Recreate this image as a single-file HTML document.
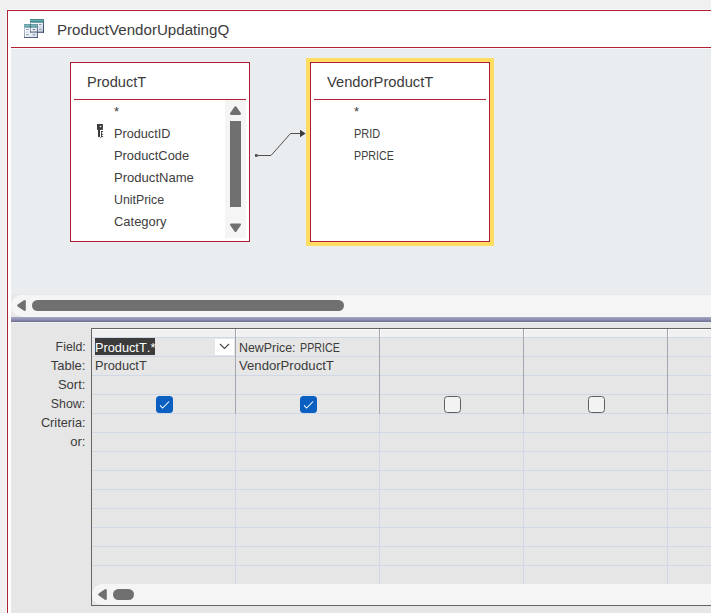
<!DOCTYPE html>
<html>
<head>
<meta charset="utf-8">
<style>
html,body{margin:0;padding:0;}
body{width:711px;height:613px;overflow:hidden;background:#f0f0f0;position:relative;
 font-family:"Liberation Sans",sans-serif;color:#3b3b3b;}
.abs{position:absolute;}
.t{position:absolute;white-space:nowrap;line-height:1;transform-origin:0 0;}
/* window */
#halo{left:6px;top:9px;width:720px;height:620px;border-left:1px solid #f1fcfc;border-top:1px solid #f1fcfc;}
#win{left:7px;top:10px;width:720px;height:620px;border-left:1px solid #b11f30;border-top:1px solid #b11f30;background:#fff;}
#tline{left:11px;top:47px;width:720px;height:1px;background:#b11f30;}
#tline2{left:11px;top:48px;width:720px;height:1px;background:#f1fbfb;}
#upper{left:11px;top:49px;width:720px;height:245px;background:#e9edf0;}
/* table boxes */
.box{position:absolute;background:#fff;border:1px solid #b11f30;box-sizing:border-box;}
.sep{position:absolute;height:1px;background:#b11f30;}
.fld{position:absolute;white-space:nowrap;line-height:1;font-size:13px;color:#404040;transform-origin:0 0;}
/* scrollbars */
.dk{background:#707070;}
/* lower pane */
#hsb{left:11px;top:294px;width:720px;height:23px;background:#e8e8e8;}
#hsbt{left:11px;top:295px;width:720px;height:21px;background:#f5f5f5;border-radius:10px 0 0 10px;}
#split{left:11px;top:317px;width:720px;height:5px;background:linear-gradient(#a7a7c3,#9292b2 45%,#6d6d93);}
#lower{left:11px;top:322px;width:720px;height:300px;background:#e6e6e6;}
.lbl{position:absolute;white-space:nowrap;line-height:1;font-size:13px;color:#3b3b3b;text-align:right;right:625.6px;transform-origin:100% 0;}
.gt{position:absolute;white-space:nowrap;line-height:1;font-size:13px;color:#3b3b3b;transform-origin:0 0;}
.hl{position:absolute;left:92px;width:640px;height:1px;background:#d0d8e8;}
.vl{position:absolute;width:1px;}
.cb{position:absolute;top:396px;width:17px;height:17px;box-sizing:border-box;border-radius:3.5px;}
.cb.on{background:#0a5fc0;}
.cb.off{background:#f3f3f3;border:1px solid #5e5e5e;}
</style>
</head>
<body>
<div class="abs" id="halo"></div>
<div class="abs" id="win"></div>
<div class="abs" id="tline"></div>
<div class="abs" id="tline2"></div>
<div class="abs" id="upper"></div>

<!-- title icon -->
<svg class="abs" style="left:23px;top:18px" width="23" height="22" viewBox="0 0 23 22">
 <defs>
  <linearGradient id="bd" x1="0" y1="0" x2="1" y2="1"><stop offset="0" stop-color="#ffffff"/><stop offset="0.5" stop-color="#eef2f8"/><stop offset="1" stop-color="#c3cee0"/></linearGradient>
  <linearGradient id="hd" x1="0" y1="0" x2="0" y2="1"><stop offset="0" stop-color="#2c7476"/><stop offset="0.35" stop-color="#74b3b7"/><stop offset="0.6" stop-color="#438f92"/><stop offset="1" stop-color="#3a8588"/></linearGradient>
  <linearGradient id="rb" x1="0" y1="0" x2="0" y2="1"><stop offset="0" stop-color="#5f7a92"/><stop offset="1" stop-color="#2f3f5a"/></linearGradient>
  <linearGradient id="lb" x1="0" y1="0" x2="0" y2="1"><stop offset="0" stop-color="#a9b6c8"/><stop offset="1" stop-color="#6f7f99"/></linearGradient>
 </defs>
 <!-- back table -->
 <g>
  <rect x="7" y="1" width="14" height="13.7" fill="url(#bd)"/>
  <rect x="7" y="1" width="14" height="3.7" fill="url(#hd)"/>
  <rect x="7" y="4.7" width="1" height="10" fill="url(#lb)"/>
  <rect x="20" y="1" width="1" height="13.7" fill="url(#rb)"/>
  <rect x="7" y="13.7" width="14" height="1" fill="#33435e"/>
  <rect x="16" y="6" width="2.6" height="1" fill="#8797b2"/>
  <rect x="16" y="8.7" width="2.6" height="1" fill="#bcc6d6"/>
  <rect x="16" y="11" width="2.6" height="1" fill="#8797b2"/>
 </g>
 <!-- front table (slightly translucent so back shows through) -->
 <g opacity="0.82">
  <rect x="1" y="6" width="14" height="14" fill="url(#bd)"/>
  <rect x="1" y="6" width="14" height="3.7" fill="url(#hd)"/>
  <rect x="1" y="9.7" width="1" height="10.3" fill="url(#lb)"/>
  <rect x="14" y="6" width="1" height="14" fill="url(#rb)"/>
  <rect x="1" y="19" width="14" height="1" fill="#2f3f5a"/>
  <rect x="3" y="11" width="2.8" height="1" fill="#7a8aa6"/>
  <rect x="9.6" y="11" width="2.6" height="1" fill="#55657f"/>
  <rect x="3" y="13.6" width="2.8" height="1" fill="#b4bfd0"/>
  <rect x="3" y="16.2" width="2.8" height="1" fill="#6f7f99"/>
  <rect x="9.6" y="16.2" width="2.6" height="1" fill="#6f7f99"/>
 </g>
 <rect x="7" y="6" width="1" height="8.7" fill="#2f4460" opacity="0.45"/>
 <rect x="7" y="13.4" width="7" height="1.3" fill="#2f3f5a" opacity="0.55"/>
</svg>
<div class="t" id="title" style="left:57.3px;top:21.9px;font-size:15.5px;transform:scaleX(.9745);color:#3b3b3b;">ProductVendorUpdatingQ</div>

<!-- ProductT box -->
<div class="box" style="left:70px;top:62px;width:180px;height:180px;"></div>
<div class="sep" style="left:74px;top:99px;width:172px;"></div>
<div class="t" id="h1" style="left:87px;top:73.6px;font-size:15.5px;transform:scaleX(.941);color:#3b3b3b;">ProductT</div>
<div class="fld" id="f0" style="left:114px;top:105.2px;">*</div>
<div class="fld" id="f1" style="left:114px;top:126.5px;transform:scaleX(.976);">ProductID</div>
<div class="fld" id="f2" style="left:114px;top:148.5px;transform:scaleX(.99);">ProductCode</div>
<div class="fld" id="f3" style="left:114px;top:170.5px;transform:scaleX(1.005);">ProductName</div>
<div class="fld" id="f4" style="left:114px;top:192.5px;transform:scaleX(.95);">UnitPrice</div>
<div class="fld" id="f5" style="left:114px;top:214.5px;transform:scaleX(.995);">Category</div>
<!-- key icon -->
<svg class="abs" style="left:96px;top:123px" width="9" height="16" viewBox="0 0 9 16">
 <rect x="1" y="1" width="5.9" height="5.9" fill="#3a3a3a"/>
 <rect x="3.8" y="2.8" width="1.4" height="1.4" fill="#fff"/>
 <rect x="2" y="6.9" width="2" height="7" fill="#3a3a3a"/>
 <rect x="5" y="8" width="0.9" height="5.9" fill="#3a3a3a"/>
 <rect x="5" y="8" width="2.1" height="0.9" fill="#3a3a3a"/>
 <rect x="5" y="10.9" width="2.1" height="0.9" fill="#3a3a3a"/>
 <rect x="5" y="13" width="2.1" height="0.9" fill="#3a3a3a"/>
 <path d="M4 14 L4.55 15.1 L5.1 14" fill="none" stroke="#3a3a3a" stroke-width="0.55"/>
</svg>
<!-- vertical scrollbar -->
<div class="abs" style="left:225px;top:100px;width:21px;height:138px;background:#f5f5f5;"></div>
<div class="abs dk" style="left:230px;top:121px;width:11px;height:86px;"></div>
<svg class="abs" style="left:229px;top:104px" width="13" height="12" viewBox="0 0 13 12"><path d="M6.5 3.4 L10.8 9.7 L2.2 9.7 Z" fill="#707070" stroke="#707070" stroke-width="2.4" stroke-linejoin="round"/></svg>
<svg class="abs" style="left:229px;top:221px" width="13" height="12" viewBox="0 0 13 12"><path d="M6.5 9.7 L10.8 3.6 L2.2 3.6 Z" fill="#707070" stroke="#707070" stroke-width="2.4" stroke-linejoin="round"/></svg>

<!-- join line -->
<svg class="abs" style="left:250px;top:120px" width="60" height="45" viewBox="0 0 60 45">
 <rect x="5" y="34.2" width="2.6" height="2.6" fill="#444"/>
 <path d="M6 35.5 H21 L40.5 13.5 H51" fill="none" stroke="#505050" stroke-width="1"/>
 <path d="M50 9.8 L55.6 13.5 L50 17.2 Z" fill="#3a3a3a"/>
</svg>

<!-- VendorProductT box -->
<div class="abs" style="left:306px;top:58px;width:188px;height:188px;background:#ffdd62;"></div>
<div class="box" style="left:310px;top:62px;width:180px;height:180px;"></div>
<div class="sep" style="left:314px;top:99px;width:172px;"></div>
<div class="t" id="h2" style="left:327.4px;top:73.6px;font-size:15.5px;transform:scaleX(.949);color:#3b3b3b;">VendorProductT</div>
<div class="fld" id="v0" style="left:354px;top:105.2px;">*</div>
<div class="fld" id="v1" style="left:354.4px;top:126.5px;transform:scaleX(.845);">PRID</div>
<div class="fld" id="v2" style="left:354.4px;top:148.5px;transform:scaleX(.822);">PPRICE</div>

<!-- horizontal scrollbar of upper pane -->
<div class="abs" id="hsb"></div>
<div class="abs" id="hsbt"></div>
<svg class="abs" style="left:15px;top:299px" width="13" height="13" viewBox="0 0 13 13"><path d="M3.4 6.5 L9.6 2.2 L9.6 10.8 Z" fill="#707070" stroke="#707070" stroke-width="2.4" stroke-linejoin="round"/></svg>
<div class="abs dk" style="left:32px;top:300px;width:312px;height:11px;border-radius:5.5px;"></div>
<div class="abs" style="left:22px;top:316px;width:700px;height:1px;background:#f7f7f7;"></div>
<div class="abs" id="split"></div>

<!-- lower pane -->
<div class="abs" id="lower"></div>
<div class="abs" style="left:11px;top:322px;width:720px;height:1px;background:#efefef;"></div>
<div class="lbl" id="l0" style="top:339.6px;transform:scaleX(.95);">Field:</div>
<div class="lbl" id="l1" style="top:358.6px;">Table:</div>
<div class="lbl" id="l2" style="top:377.6px;">Sort:</div>
<div class="lbl" id="l3" style="top:396.6px;transform:scaleX(.95);">Show:</div>
<div class="lbl" id="l4" style="top:415.6px;transform:scaleX(.98);">Criteria:</div>
<div class="lbl" id="l5" style="top:434.6px;">or:</div>

<!-- grid -->
<div class="abs" style="left:91px;top:328px;width:640px;height:1px;background:#646464;"></div>
<div class="abs" style="left:91px;top:328px;width:1px;height:278px;background:#646464;"></div>
<div class="abs" style="left:92px;top:329px;width:640px;height:8px;background:#f0f0f0;"></div>
<div class="abs" style="left:92px;top:329px;width:640px;height:1px;background:#fbfbfb;"></div>
<div class="hl" style="top:337px"></div>
<div class="hl" style="top:356px"></div>
<div class="hl" style="top:375px"></div>
<div class="hl" style="top:394px"></div>
<div class="hl" style="top:413px"></div>
<div class="hl" style="top:432px"></div>
<div class="hl" style="top:451px"></div>
<div class="hl" style="top:470px"></div>
<div class="hl" style="top:489px"></div>
<div class="hl" style="top:508px"></div>
<div class="hl" style="top:527px"></div>
<div class="hl" style="top:546px"></div>
<div class="hl" style="top:565px"></div>
<!-- column separators -->
<div class="vl" style="left:235px;top:329px;height:85px;background:#a2a6b0;"></div>
<div class="vl" style="left:235px;top:414px;height:170px;background:#d0d8e8;"></div>
<div class="vl" style="left:236px;top:329px;height:8px;background:#fbfbfb;"></div>
<div class="vl" style="left:379px;top:329px;height:85px;background:#a2a6b0;"></div>
<div class="vl" style="left:379px;top:414px;height:170px;background:#d0d8e8;"></div>
<div class="vl" style="left:380px;top:329px;height:8px;background:#fbfbfb;"></div>
<div class="vl" style="left:523px;top:329px;height:85px;background:#a2a6b0;"></div>
<div class="vl" style="left:523px;top:414px;height:170px;background:#d0d8e8;"></div>
<div class="vl" style="left:524px;top:329px;height:8px;background:#fbfbfb;"></div>
<div class="vl" style="left:667px;top:329px;height:85px;background:#a2a6b0;"></div>
<div class="vl" style="left:667px;top:414px;height:170px;background:#d0d8e8;"></div>
<div class="vl" style="left:668px;top:329px;height:8px;background:#fbfbfb;"></div>

<!-- cell contents -->
<div class="abs" style="left:95px;top:338px;width:60px;height:17px;background:#3c3c3c;"></div>
<div class="gt" id="g0" style="left:95px;top:340.6px;color:#fff;transform:scaleX(.98);">ProductT<span style="letter-spacing:.3px">.*</span></div>
<div class="abs" style="left:215px;top:339px;width:19px;height:16px;background:#fff;"></div>
<svg class="abs" style="left:215px;top:339px" width="19" height="16" viewBox="0 0 19 16"><path d="M5 5 L9.5 9.5 L14 5" fill="none" stroke="#444" stroke-width="1.1"/></svg>
<div class="gt" id="g1t" style="left:95px;top:359.4px;transform:scaleX(.98);">ProductT</div>
<div class="gt" id="g2" style="left:239px;top:340.6px;transform:scaleX(.955);">NewPrice:</div>
<div class="gt" id="g2b" style="left:300px;top:340.6px;transform:scaleX(.822);">PPRICE</div>
<div class="gt" id="g3" style="left:239.1px;top:359.4px;transform:scaleX(1.01);">VendorProductT</div>

<!-- checkboxes -->
<div class="cb on" style="left:156px;"></div>
<svg class="abs" style="left:156px;top:396px" width="17" height="17" viewBox="0 0 17 17"><path d="M4 9.3 L6.6 12 L13.1 5.5" fill="none" stroke="#fff" stroke-width="1.05"/></svg>
<div class="cb on" style="left:300px;"></div>
<svg class="abs" style="left:300px;top:396px" width="17" height="17" viewBox="0 0 17 17"><path d="M4 9.3 L6.6 12 L13.1 5.5" fill="none" stroke="#fff" stroke-width="1.05"/></svg>
<div class="cb off" style="left:444px;"></div>
<div class="cb off" style="left:588px;"></div>

<!-- grid bottom scrollbar -->
<div class="abs" style="left:92px;top:584px;width:640px;height:21px;background:#f5f5f5;border-radius:10px 0 0 10px;"></div>
<div class="abs" style="left:91px;top:605px;width:640px;height:1px;background:#646464;"></div>
<svg class="abs" style="left:96px;top:588px" width="13" height="13" viewBox="0 0 13 13"><path d="M3.4 6.5 L9.6 2.2 L9.6 10.8 Z" fill="#707070" stroke="#707070" stroke-width="2.4" stroke-linejoin="round"/></svg>
<div class="abs dk" style="left:113px;top:589px;width:21px;height:11px;border-radius:5.5px;"></div>
</body>
</html>
